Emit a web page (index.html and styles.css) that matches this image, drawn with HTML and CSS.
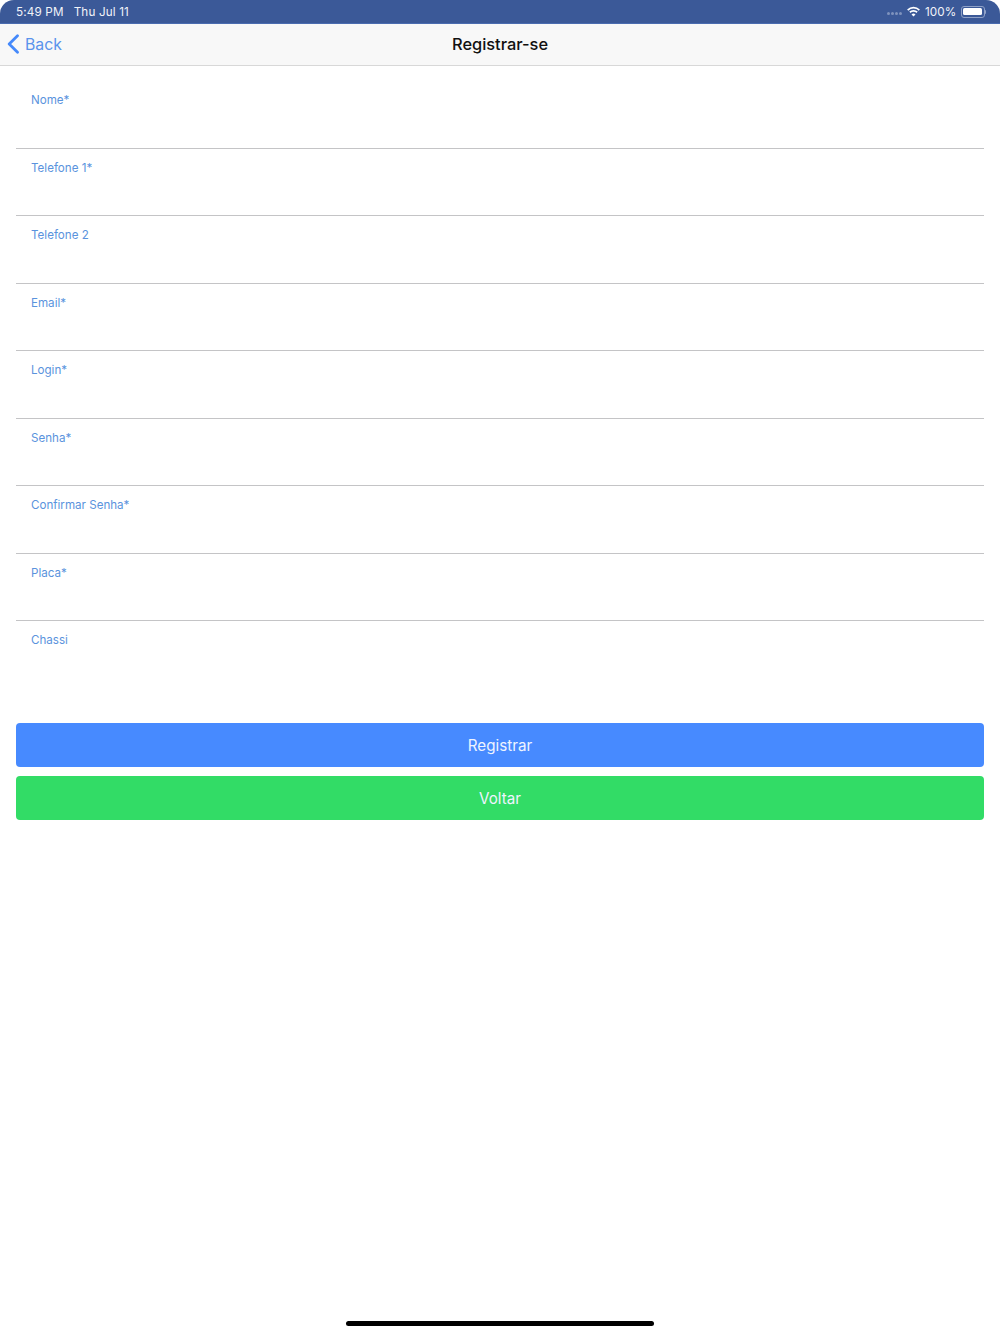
FILE: index.html
```html
<!DOCTYPE html>
<html lang="en">
<head>
    <meta charset="UTF-8">
    <meta name="viewport" content="width=device-width, initial-scale=1.0">
    <title>Registrar-se</title>
    <link rel="stylesheet" href="styles.css">
</head>
<body>
    <div class="screen">
        <!-- Status bar -->
        <div class="status-bar">
            <div class="status-left">
                <span>5:49 PM</span>
                <span>Thu Jul 11</span>
            </div>
            <div class="status-right">
                <div class="signal-dots">
                    <i></i><i></i><i></i><i></i>
                </div>
                <svg class="wifi-icon" width="15" height="11" viewBox="0 0 15 11">
                    <path d="M7.5 2.6c2 0 3.8.8 5.2 2.1l1.2-1.3A9.300 9.300 0 0 0 7.500.8 9.300 9.300 0 0 0 1.100 3.400l1.200 1.300A7.500 7.500 0 0 1 7.500 2.600z" fill="#fff"/>
                    <path d="M7.500 5.700c1.200 0 2.200.4 3 1.200l1.200-1.300a6.100 6.100 0 0 0-8.400 0l1.200 1.300c.8-.8 1.800-1.200 3-1.200z" fill="#fff"/>
                    <path d="M7.500 10.600l2-2.200a2.900 2.900 0 0 0-4 0z" fill="#fff"/>
                </svg>
                <span>100%</span>
                <div class="battery">
                    <div class="battery-body"><div class="battery-fill"></div></div>
                    <div class="battery-tip"></div>
                </div>
            </div>
        </div>

        <!-- Navigation bar -->
        <div class="nav-bar">
            <div class="back-link">
                <svg width="14" height="20" viewBox="0 0 14 20">
                    <path d="M11.500 1.800L3.200 10l8.300 8.200" fill="none" stroke="#4589fb" stroke-width="2.800" stroke-linecap="round" stroke-linejoin="round"/>
                </svg>
                <span>Back</span>
            </div>
            <h1 class="nav-title">Registrar-se</h1>
        </div>

        <!-- Form -->
        <form class="register-form">
            <div class="field"><label class="field-label">Nome*</label></div>
            <div class="field"><label class="field-label">Telefone 1*</label></div>
            <div class="field"><label class="field-label">Telefone 2</label></div>
            <div class="field"><label class="field-label">Email*</label></div>
            <div class="field"><label class="field-label">Login*</label></div>
            <div class="field"><label class="field-label">Senha*</label></div>
            <div class="field"><label class="field-label">Confirmar Senha*</label></div>
            <div class="field"><label class="field-label">Placa*</label></div>
            <div class="field field-last"><label class="field-label">Chassi</label></div>

            <div class="buttons">
                <button type="button" class="form-button button-blue">Registrar</button>
                <button type="button" class="form-button button-green">Voltar</button>
            </div>
        </form>

        <div class="home-indicator"></div>
    </div>
</body>
</html>
```

FILE: styles.css
```css
/* Base */
* {
    margin: 0;
    padding: 0;
    box-sizing: border-box;
}

body {
    font-family: 'Inter', 'Liberation Sans', sans-serif;
    background-color: #fff;
}

.screen {
    width: 1000px;
    height: 1334px;
    display: flex;
    flex-direction: column;
    position: relative;
    overflow: hidden;
}

/* Status bar */
.status-bar {
    height: 24px;
    flex-shrink: 0;
    display: flex;
    justify-content: space-between;
    align-items: center;
    padding: 0 14px 0 16px;
    background-color: #3b5998;
    border-bottom: 1px solid #4a6cb0;
    border-radius: 14px 14px 0 0;
    color: #f1f3f8;
    font-size: 11.700px;
    letter-spacing: 0.15px;
}

.status-left {
    display: flex;
    gap: 10px;
}

.status-right {
    display: flex;
    align-items: center;
}

.signal-dots {
    display: flex;
    gap: 1px;
    margin-right: 4px;
    margin-top: 4px;
}

.signal-dots i {
    width: 3px;
    height: 3px;
    border-radius: 50%;
    background-color: #7f93bd;
}

.wifi-icon {
    margin-right: 4px;
}

.battery {
    display: flex;
    align-items: center;
    margin-left: 4px;
}

.battery-body {
    width: 24px;
    height: 12px;
    padding: 1.5px;
    border: 1px solid #8fa1c7;
    border-radius: 3px;
}

.battery-fill {
    height: 100%;
    background-color: #fff;
    border-radius: 1.5px;
}

.battery-tip {
    width: 1.5px;
    height: 4px;
    background-color: #8fa1c7;
    border-radius: 0 1px 1px 0;
}

/* Navigation bar */
.nav-bar {
    height: 42px;
    flex-shrink: 0;
    display: flex;
    align-items: center;
    justify-content: center;
    padding-bottom: 2px;
    position: relative;
    background-color: #f8f8f8;
    border-bottom: 1px solid #d8d8d8;
}

.back-link {
    position: absolute;
    left: 6px;
    top: 10px;
    display: flex;
    align-items: center;
    gap: 5px;
    color: #5a93ec;
    font-size: 15.800px;
}

.nav-title {
    font-size: 16.400px;
    font-weight: 500;
    color: #111;
}

/* Form */
.register-form {
    display: flex;
    flex-direction: column;
    padding: 15.200px 16px 0;
}

.field {
    height: 67.500px;
    padding: 11.300px 15px 0;
    border-bottom: 1px solid #c4c4c6;
}

.field-last {
    height: 102px;
    border-bottom: none;
}

.field-label {
    display: block;
    font-size: 11.600px;
    line-height: 16px;
    color: #5a93dd;
}

/* Buttons */
.buttons {
    display: flex;
    flex-direction: column;
    gap: 9px;
}

.form-button {
    height: 44px;
    border: none;
    border-radius: 4px;
    color: #eef4ff;
    font-family: inherit;
    font-size: 15.200px;
}

.button-blue {
    background-color: #478aff;
}

.button-green {
    background-color: #32dc66;
}

/* Home indicator */
.home-indicator {
    position: absolute;
    left: 346px;
    bottom: 8px;
    width: 308px;
    height: 5px;
    background-color: #000;
    border-radius: 3px;
}
```
